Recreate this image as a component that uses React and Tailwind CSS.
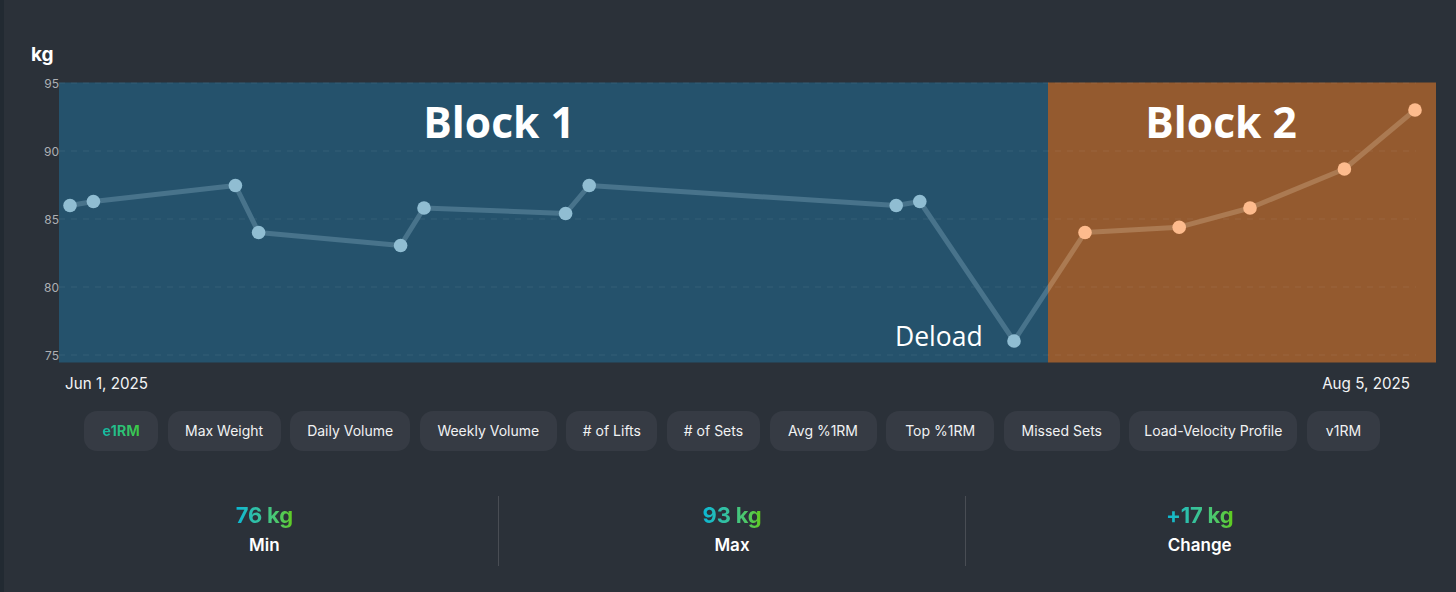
const blue = [[70,205.5],[93.4,201.5],[235.4,185.5],[258.6,232.5],[400.6,245.5],[424,208],[565.6,213.5],[589.2,185.5],[896.2,205.5],[919.8,201.5],[1014,341]];
const orange = [[1085,232.5],[1179.2,227.2],[1250,208],[1344.4,169],[1415,110]];
const tabs = [
  ["e1RM", "w-[74px]"],
  ["Max Weight", "w-[113px]"],
  ["Daily Volume", "w-[120px]"],
  ["Weekly Volume", "w-[137px]"],
  ["# of Lifts", "w-[91px]"],
  ["# of Sets", "w-[93px]"],
  ["Avg %1RM", "w-[107px]"],
  ["Top %1RM", "w-[108px]"],
  ["Missed Sets", "w-[116px]"],
  ["Load-Velocity Profile", "w-[168px]"],
  ["v1RM", "w-[73px]"],
];
const ticks = [[95,83],[90,151],[85,219],[80,287],[75,355]];
const pts = (a) => a.map((p) => p.join(",")).join(" ");
const all = pts([...blue, ...orange]);

function Chart() {
  return (
    <svg width="1425" height="304" viewBox="31 68 1425 304" className="block">
      <defs>
        <clipPath id="clipBlue"><rect x="59" y="82" width="989" height="281" /></clipPath>
        <clipPath id="clipOrange"><rect x="1048" y="82" width="388" height="281" /></clipPath>
      </defs>
      <rect x="59" y="82.5" width="989" height="280" fill="#25526c" />
      <rect x="1048" y="82.5" width="388" height="280" fill="#945a2f" />
      {ticks.map(([v, y]) => (
        <g key={v}>
          <line x1="59" x2="1416" y1={y} y2={y} stroke="#ffffff" strokeOpacity="0.07" strokeDasharray="6 6" />
          <text x="59" y={y + 4.5} textAnchor="end" fontSize="12" fill="#adb0b4" fontFamily="Inter, sans-serif">{v}</text>
        </g>
      ))}
      <polyline points={all} clipPath="url(#clipBlue)" fill="none" stroke="#48738b" strokeWidth="5" strokeLinejoin="round" />
      <polyline points={all} clipPath="url(#clipOrange)" fill="none" stroke="#ab7a52" strokeWidth="5" strokeLinejoin="round" />
      {blue.map(([x, y]) => <circle key={x} cx={x} cy={y} r="6.8" fill="#90bdd2" />)}
      {orange.map(([x, y]) => <circle key={x} cx={x} cy={y} r="6.8" fill="#fdbb8d" />)}
      <text x="499" y="138" textAnchor="middle" fontSize="42.5" fontWeight="700" fill="#fff" fontFamily="'Open Sans', sans-serif">Block 1</text>
      <text x="1221" y="138" textAnchor="middle" fontSize="42.5" fontWeight="700" fill="#fff" fontFamily="'Open Sans', sans-serif">Block 2</text>
      <text x="895" y="346" fontSize="26.5" fill="#fff" fontFamily="'Open Sans', sans-serif">Deload</text>
    </svg>
  );
}

function Stat({ value, label, last }) {
  return (
    <div className={`flex-1 h-[70px] flex flex-col items-center pt-[5px] ${last ? "" : "border-r border-[#494d54]"}`}>
      <div className="text-[22px] leading-[28px] font-bold tracking-[-0.2px] bg-gradient-to-r from-[#06b6d4] to-[#60cc10] bg-clip-text text-transparent">{value}</div>
      <div className="text-[17px] leading-[24px] mt-[4px] font-semibold text-white">{label}</div>
    </div>
  );
}

export default function App() {
  return (
    <div className="w-[1456px] h-[592px] overflow-hidden flex bg-[#2b3139] text-white" style={{ fontFamily: "Inter, sans-serif" }}>
      <div className="w-[4px] bg-[#222a32] shrink-0" />
      <div className="flex-1 pl-[27px] pt-[44px] flex flex-col">
        <div className="text-[19px] leading-[22px] font-bold h-[24px]">kg</div>
        <Chart />
        <div className="flex justify-between pl-[34px] pr-[46px] h-[24px] text-[15.2px] leading-[24px] text-[#f3f4f5]">
          <span>Jun 1, 2025</span>
          <span>Aug 5, 2025</span>
        </div>
        <div className="flex gap-[9.6px] pl-[53px] mt-[15px]">
          {tabs.map(([t, w], i) => (
            <div key={t} className={`${w} h-[40px] pb-[1px] rounded-[13px] bg-[#363b44] flex items-center justify-center text-[14px] whitespace-nowrap ${i === 0 ? "font-bold" : "text-[#f1f2f3]"}`}>
              {i === 0 ? <span className="text-[14.5px] bg-gradient-to-r from-[#14b8a6] to-[#3fc83a] bg-clip-text text-transparent">{t}</span> : t}
            </div>
          ))}
        </div>
        <div className="flex w-[1402px] mt-[45px]">
          <Stat value="76 kg" label="Min" />
          <Stat value="93 kg" label="Max" />
          <Stat value="+17 kg" label="Change" last />
        </div>
      </div>
    </div>
  );
}
